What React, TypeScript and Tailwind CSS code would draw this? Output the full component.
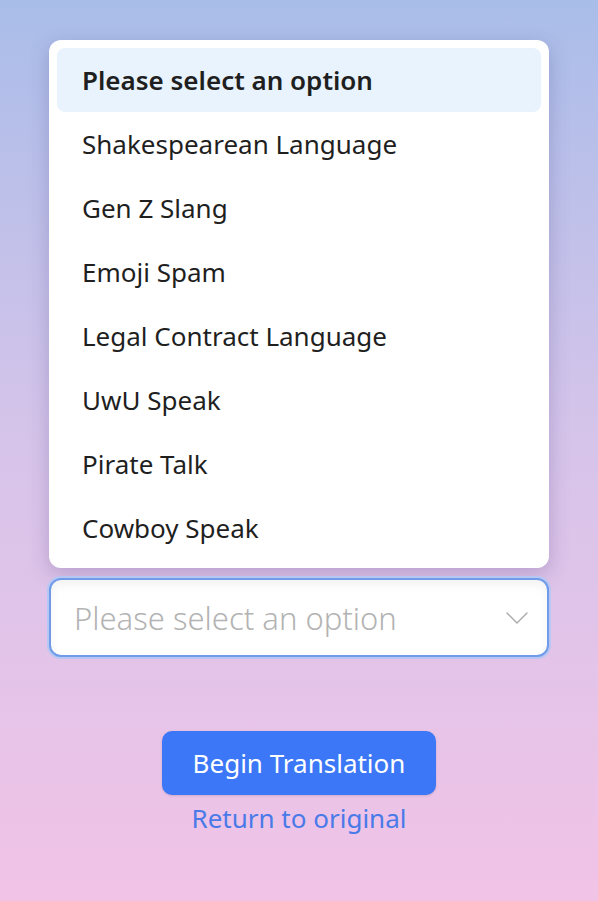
import React, { useState } from 'react';
import { ChevronDown } from 'lucide-react';

const OPTIONS = [
  'Please select an option',
  'Shakespearean Language',
  'Gen Z Slang',
  'Emoji Spam',
  'Legal Contract Language',
  'UwU Speak',
  'Pirate Talk',
  'Cowboy Speak',
];

const App: React.FC = () => {
  const [selected] = useState(0);

  return (
    <div
      className="min-h-[901px] w-full bg-gradient-to-b from-[#a9bde9] via-[#d7c4ea] to-[#f1c3e7] flex flex-col items-center pt-[40px]"
      style={{ fontFamily: '"Noto Sans", "Open Sans", sans-serif' }}
    >
      {/* Dropdown menu */}
      <div className="w-[500px] bg-white rounded-[12px] p-2 shadow-[0_6px_20px_rgba(60,50,120,0.25)]">
        {OPTIONS.map((opt, i) => (
          <div
            key={opt}
            className={`h-16 flex items-center px-[25px] rounded-lg text-[26px] text-[#1f1f1f] ${
              i === selected ? 'bg-[#e8f3fd] font-semibold' : ''
            }`}
          >
            {opt}
          </div>
        ))}
      </div>

      {/* Select box */}
      <div className="mt-[10px] w-[500px] h-[79px] bg-white rounded-[12px] border-2 border-[#6f9be9] ring-2 ring-[#b7c6f3] shadow-[inset_0_5px_10px_rgba(0,0,0,0.05)] flex items-center justify-between pl-[23px] pr-[10px]">
        <span className="text-[31px] font-light text-[#b3b3b3] mt-[2px]">Please select an option</span>
        <ChevronDown size={40} strokeWidth={0.8} className="text-[#a8a8a8]" />
      </div>

      {/* Actions */}
      <button className="mt-[74px] w-[274px] h-16 bg-[#3b77f6] rounded-[10px] text-white text-[26px] shadow-sm">
        Begin Translation
      </button>
      <a className="mt-[4px] text-[26px] text-[#4a7ae8]">Return to original</a>
    </div>
  );
};

export default App;
